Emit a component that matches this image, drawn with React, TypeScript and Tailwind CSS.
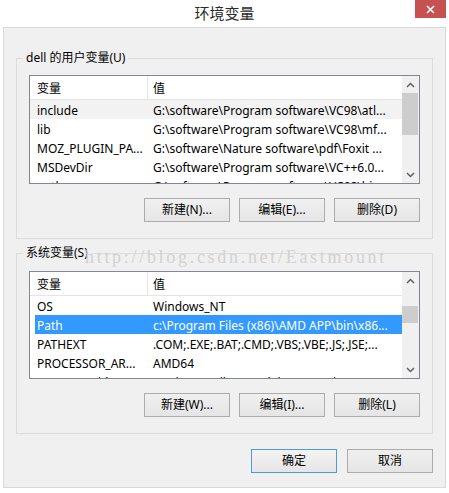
import React from "react";

const F = "font-['Noto_Sans','Noto_Sans_CJK_SC',sans-serif]";

type Row = { name: string; value: string; hover?: boolean; sel?: boolean };

const userVars: Row[] = [
  { name: "include", value: "G:\\software\\Program software\\VC98\\atl...", hover: true },
  { name: "lib", value: "G:\\software\\Program software\\VC98\\mf..." },
  { name: "MOZ_PLUGIN_PA...", value: "G:\\software\\Nature software\\pdf\\Foxit ..." },
  { name: "MSDevDir", value: "G:\\software\\Program software\\VC++6.0..." },
  { name: "path", value: "G:\\software\\Program software\\VC98\\bin..." },
];

const sysVars: Row[] = [
  { name: "OS", value: "Windows_NT" },
  { name: "Path", value: "c:\\Program Files (x86)\\AMD APP\\bin\\x86...", sel: true },
  { name: "PATHEXT", value: ".COM;.EXE;.BAT;.CMD;.VBS;.VBE;.JS;.JSE;..." },
  { name: "PROCESSOR_AR...", value: "AMD64" },
  { name: "processor_id...", value: "Intel64 Family 6 Model 58 Stepping 9, ..." },
];

// small chevron for the scrollbar arrows
const Chevron = ({ up }: { up?: boolean }) => (
  <svg width="9" height="6" viewBox="0 0 9 6">
    <path
      d={up ? "M1 5 L4.5 1.5 L8 5" : "M1 1 L4.5 4.5 L8 1"}
      fill="none"
      stroke="#606060"
      strokeWidth="1.5"
    />
  </svg>
);

const Btn = ({ label, def }: { label: string; def?: boolean }) => (
  <button
    className={
      "w-[86px] h-[24px] border flex items-center justify-center text-[12px] text-black bg-linear-to-b " +
      (def
        ? "border-[#4d9bd7] from-[#f3f3f3] to-[#e6e6e6]"
        : "border-[#acacac] from-[#f0f0f0] to-[#e5e5e5]")
    }
  >
    {label}
  </button>
);

const ListView = ({
  rows,
  height,
  thumbTop,
  thumbH,
}: {
  rows: Row[];
  height: string;
  thumbTop: string;
  thumbH: string;
}) => (
  <div className={"border border-[#828790] bg-white flex " + height}>
    <div className="flex-1 flex flex-col overflow-hidden text-[12px] leading-[16px] text-black">
      <div className="h-[24px] shrink-0 flex border-b border-[#e5e5e5]">
        <div className="w-[118px] pl-[7px] pt-[5px] border-r border-[#e5e5e5]">变量</div>
        <div className="pl-[5px] pt-[5px]">值</div>
      </div>
      {rows.map((r) => (
        <div
          key={r.name}
          className={
            "h-[19px] shrink-0 flex items-start pt-[3px] whitespace-nowrap " +
            (r.sel ? "ml-[5px] bg-[#3399ff] text-white" : r.hover ? "bg-[#f2f2f2]" : "")
          }
        >
          <div className={r.sel ? "w-[113px] pl-[2px]" : "w-[118px] pl-[7px]"}>{r.name}</div>
          <div className="pl-[5px]">{r.value}</div>
        </div>
      ))}
    </div>
    <div className="w-[17px] bg-[#f0f0f0] flex flex-col">
      <div className="h-[17px] shrink-0 flex items-center justify-center">
        <Chevron up />
      </div>
      <div className={"pr-[1px] shrink-0 " + thumbTop}>
        <div className={"bg-[#cdcdcd] " + thumbH} />
      </div>
      <div className="flex-1" />
      <div className="h-[17px] shrink-0 flex items-center justify-center">
        <Chevron />
      </div>
    </div>
  </div>
);

export default function App() {
  return (
    <div className={"w-[449px] h-[493px] bg-white flex flex-col relative overflow-hidden " + F}>
      {/* title bar */}
      <div className="h-[27px] shrink-0 flex items-center justify-center relative">
        <span className="text-[15px] text-[#2b2b2b] leading-none -mt-[1px]">环境变量</span>
        <div className="absolute top-0 right-[3px] w-[31px] h-[18px] bg-[#c75050] flex items-center justify-center">
          <svg width="9" height="9" viewBox="0 0 9 9">
            <path d="M1 1 L8 8 M8 1 L1 8" stroke="#fff" strokeWidth="1.6" />
          </svg>
        </div>
      </div>

      {/* dialog body */}
      <div className="mx-[3px] h-[461px] shrink-0 border border-[#d9d9d9] bg-[#f0f0f0] px-[12px] flex flex-col">
        <fieldset className="mt-[22px] border border-[#dcdcdc] px-[12px] pt-[9px] pb-[16px]">
          <legend className="-ml-[6px] px-[3px] text-[12px] leading-[16px] text-black">dell 的用户变量(U)</legend>
          <ListView rows={userVars} height="h-[109px]" thumbTop="mt-0" thumbH="h-[42px]" />
          <div className="mt-[14px] flex justify-end gap-[9px]">
            <Btn label="新建(N)..." />
            <Btn label="编辑(E)..." />
            <Btn label="删除(D)" />
          </div>
        </fieldset>

        <fieldset className="mt-[6px] border border-[#dcdcdc] px-[12px] pt-[10px] pb-[16px]">
          <legend className="-ml-[6px] px-[3px] text-[12px] leading-[16px] text-black">系统变量(S)</legend>
          <ListView rows={sysVars} height="h-[108px]" thumbTop="mt-[17px]" thumbH="h-[17px]" />
          <div className="mt-[14px] flex justify-end gap-[9px]">
            <Btn label="新建(W)..." />
            <Btn label="编辑(I)..." />
            <Btn label="删除(L)" />
          </div>
        </fieldset>

        <div className="mt-[15px] flex justify-end gap-[10px]">
          <Btn label="确定" def />
          <Btn label="取消" />
        </div>
      </div>

      {/* watermark */}
      <div className="absolute left-[85px] top-[247px] pointer-events-none font-['Liberation_Serif',serif] text-[18px] leading-[20px] tracking-[2.7px] text-[#d2d2d2]">
        http://blog.csdn.net/Eastmount
      </div>
    </div>
  );
}
